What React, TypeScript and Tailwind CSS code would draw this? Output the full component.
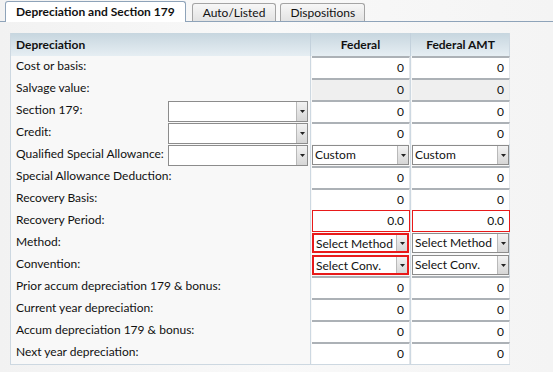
import React from "react"

type Cell =
  | { kind: "num"; value: string; disabled?: boolean; red?: boolean }
  | { kind: "select"; value: string; red?: boolean }

interface Row {
  label: string
  combo?: boolean
  fed: Cell
  amt: Cell
}

const zero: Cell = { kind: "num", value: "0" }

const rows: Row[] = [
  { label: "Cost or basis:", fed: zero, amt: zero },
  { label: "Salvage value:", fed: { kind: "num", value: "0", disabled: true }, amt: { kind: "num", value: "0", disabled: true } },
  { label: "Section 179:", combo: true, fed: zero, amt: zero },
  { label: "Credit:", combo: true, fed: zero, amt: zero },
  { label: "Qualified Special Allowance:", combo: true, fed: { kind: "select", value: "Custom" }, amt: { kind: "select", value: "Custom" } },
  { label: "Special Allowance Deduction:", fed: zero, amt: zero },
  { label: "Recovery Basis:", fed: zero, amt: zero },
  { label: "Recovery Period:", fed: { kind: "num", value: "0.0", red: true }, amt: { kind: "num", value: "0.0", red: true } },
  { label: "Method:", fed: { kind: "select", value: "Select Method", red: true }, amt: { kind: "select", value: "Select Method" } },
  { label: "Convention:", fed: { kind: "select", value: "Select Conv.", red: true }, amt: { kind: "select", value: "Select Conv." } },
  { label: "Prior accum depreciation 179 & bonus:", fed: zero, amt: zero },
  { label: "Current year depreciation:", fed: zero, amt: zero },
  { label: "Accum depreciation 179 & bonus:", fed: zero, amt: zero },
  { label: "Next year depreciation:", fed: zero, amt: zero },
]

function Arrow() {
  return (
    <div className="w-[11px] h-full shrink-0 flex items-center justify-center bg-gradient-to-b from-[#f2f2f2] to-[#d6d6d6] border-l border-[#b9b9b9]">
      <svg width="5" height="3" viewBox="0 0 5 3">
        <path d="M0 0h5L2.5 3z" fill="#222" />
      </svg>
    </div>
  )
}

function ValueCell({ cell }: { cell: Cell }) {
  if (cell.kind === "select") {
    return (
      <div className="h-[22px] px-px py-px">
        <div
          className={`h-full flex bg-white border ${cell.red ? "border-[#e81a1a] border-2" : "border-[#8c8c8c]"}`}
        >
          <div className="flex-1 pl-[2px] leading-[18px] text-[#111] overflow-hidden whitespace-nowrap">{cell.value}</div>
          <Arrow />
        </div>
      </div>
    )
  }
  return (
    <div className="h-[22px] pl-px">
      <div
        className={`h-full flex items-center justify-end pr-[5px] ${
          cell.red
            ? "border border-[#e81a1a] bg-white"
            : `border-t-2 border-t-[#acb1b6] border-r border-r-[#e2e6ea] ${cell.disabled ? "bg-[#efefef]" : "bg-white"}`
        }`}
      >
        {cell.value}
      </div>
    </div>
  )
}

export default function App() {
  return (
    <div
      className="w-[553px] h-[372px] overflow-hidden bg-gradient-to-r from-[#f2f2f2] via-[#f9f9f9] to-[#f4f4f4] text-[12px] text-[#111]"
      style={{ fontFamily: "Lato, 'Open Sans', sans-serif" }}
    >
      {/* Tabs */}
      <div className="relative h-[22px] flex items-end pl-[5px] gap-[6px] border-b border-[#8ea3b9]">
        <div className="relative top-px h-[21px] px-[10px] flex items-center font-bold bg-white border border-b-0 border-[#8ea3b9] rounded-t-[3px]">
          Depreciation and Section 179
        </div>
        <div className="h-[18px] px-[10px] flex items-center bg-gradient-to-b from-[#f7f7f7] to-[#e3e3e3] border border-b-0 border-[#a4a4a4] rounded-t-[3px]">
          Auto/Listed
        </div>
        <div className="h-[18px] px-[9px] -ml-[2px] flex items-center bg-gradient-to-b from-[#f7f7f7] to-[#e3e3e3] border border-b-0 border-[#a4a4a4] rounded-t-[3px]">
          Dispositions
        </div>
      </div>

      {/* Grid */}
      <div className="ml-[10px] mt-[11px] w-[500px] border border-[#cdd8e1] border-t-0">
        <div className="grid grid-cols-[299px_100px_100px] h-[23px] bg-gradient-to-b from-[#c7d6df] to-[#e6eef3] font-bold">
          <div className="pl-[5px] leading-[23px]">Depreciation</div>
          <div className="text-center leading-[23px] border-l border-[#c3d1dc]">Federal</div>
          <div className="text-center leading-[23px] border-l border-[#c3d1dc]">Federal AMT</div>
        </div>
        <div className="grid grid-cols-[299px_100px_100px] bg-[#f8f8f8]">
          {rows.map((r) => (
            <React.Fragment key={r.label}>
              <div className="h-[22px] flex items-center pl-[5px] pr-[2px]">
                <div className="w-[152px] shrink-0 whitespace-nowrap leading-[18px] -mt-[3px]">{r.label}</div>
                {r.combo && (
                  <div className="flex-1 h-[21px] flex bg-white border border-[#8c8c8c]">
                    <div className="flex-1" />
                    <Arrow />
                  </div>
                )}
              </div>
              <div className="border-l border-[#cdd8e1]">
                <ValueCell cell={r.fed} />
              </div>
              <div className="border-l border-[#cdd8e1]">
                <ValueCell cell={r.amt} />
              </div>
            </React.Fragment>
          ))}
        </div>
      </div>
    </div>
  )
}
